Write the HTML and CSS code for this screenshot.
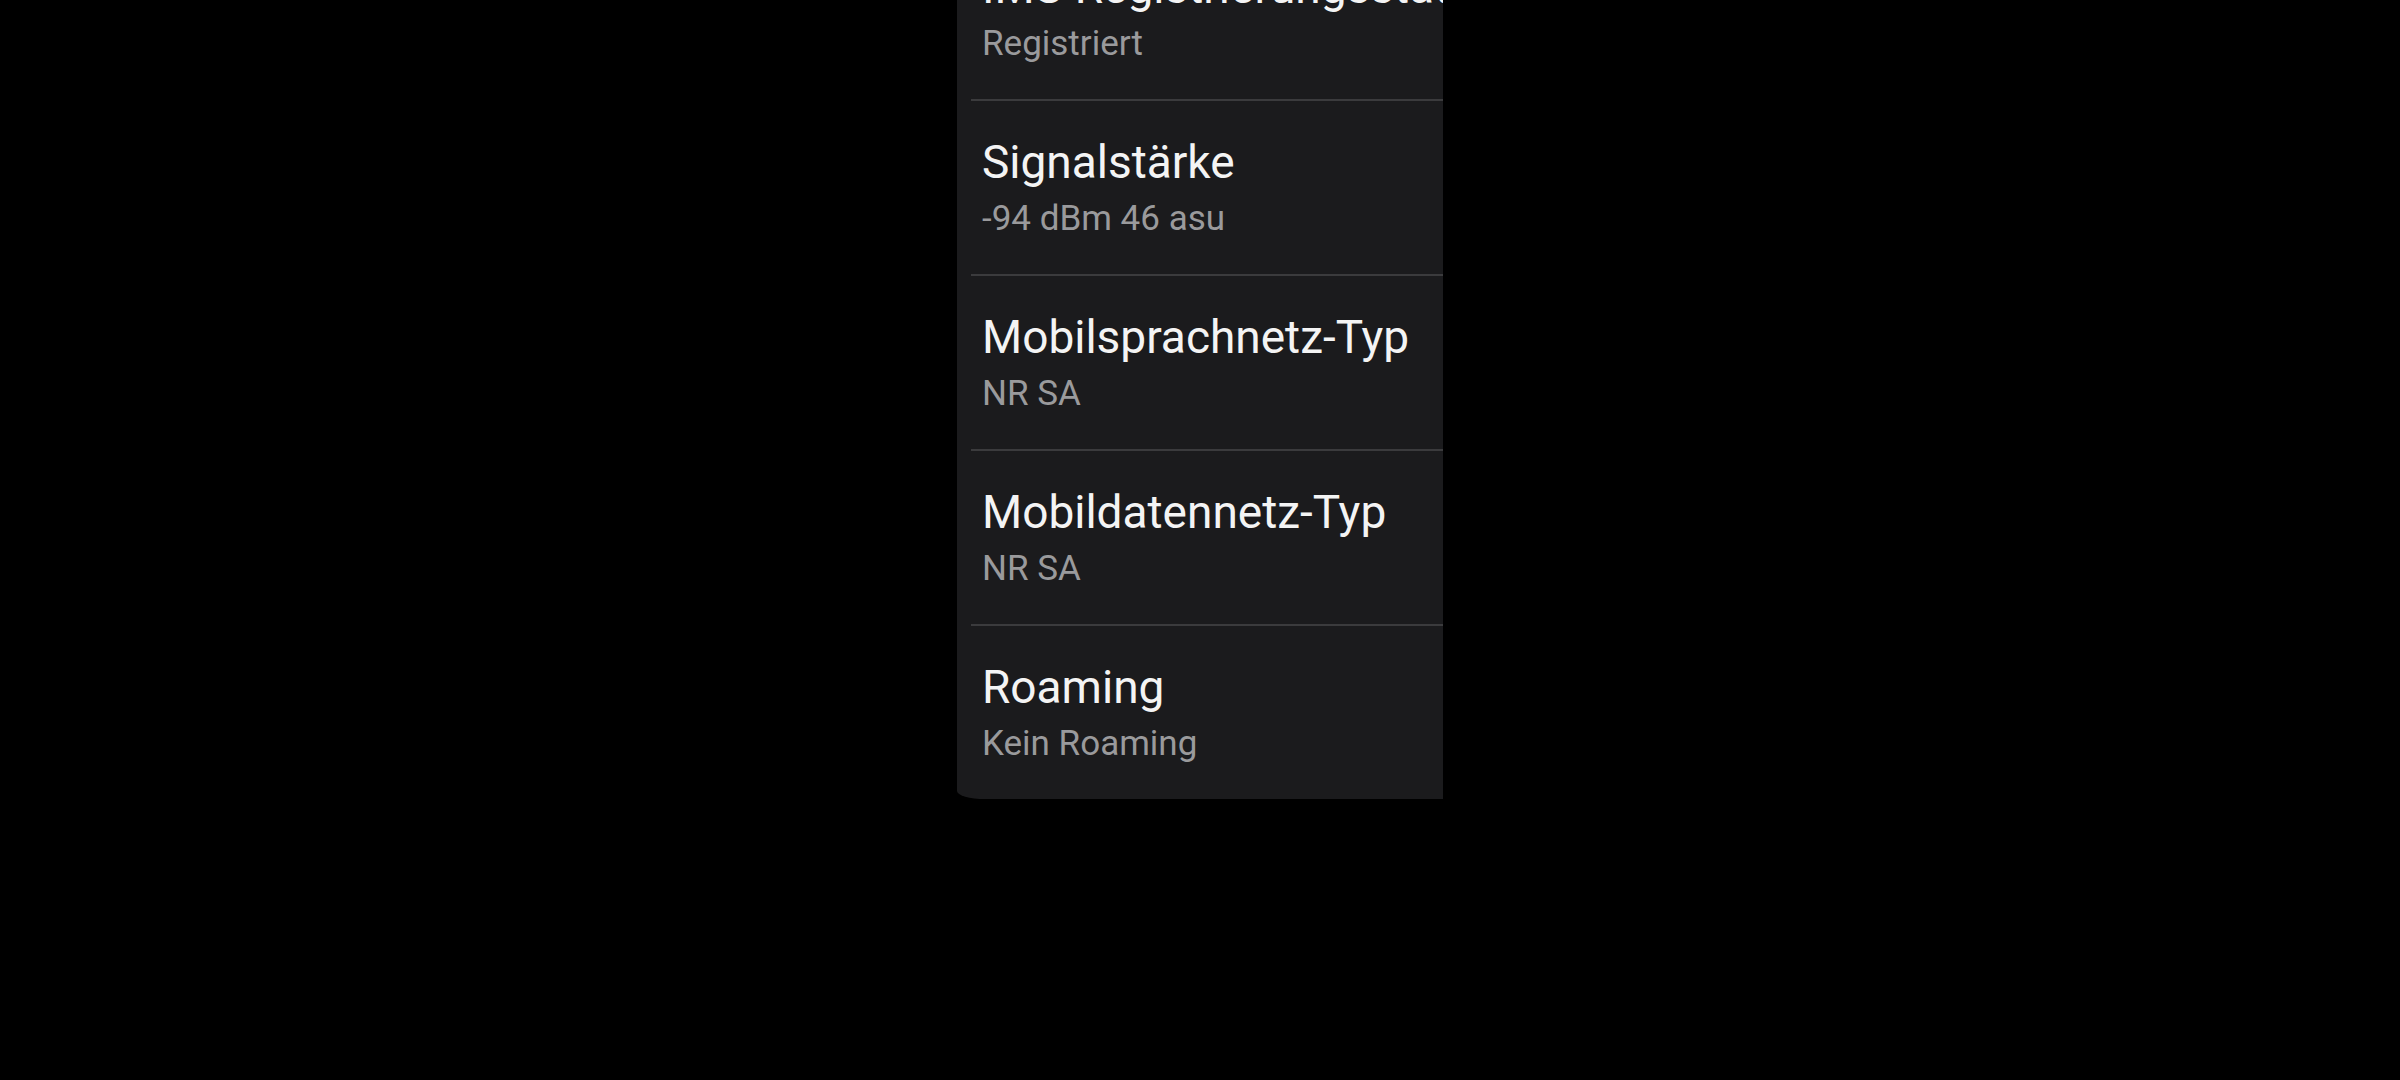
FILE: index.html
```html
<!DOCTYPE html>
<html lang="de">
<head>
    <meta charset="UTF-8">
    <meta name="viewport" content="width=device-width, initial-scale=1.0">
    <title>Netzwerk-Status</title>
    <link rel="stylesheet" href="styles.css">
</head>
<body>
    <div class="screen">
        <div class="panel">
            <div class="row">
                <div class="row-title">IMS-Registrierungsstatus</div>
                <div class="row-value">Registriert</div>
            </div>
            <div class="row">
                <div class="row-title">Signalstärke</div>
                <div class="row-value">-94 dBm 46 asu</div>
            </div>
            <div class="row">
                <div class="row-title">Mobilsprachnetz-Typ</div>
                <div class="row-value">NR SA</div>
            </div>
            <div class="row">
                <div class="row-title">Mobildatennetz-Typ</div>
                <div class="row-value">NR SA</div>
            </div>
            <div class="row">
                <div class="row-title">Roaming</div>
                <div class="row-value">Kein Roaming</div>
            </div>
        </div>
    </div>
</body>
</html>
```

FILE: styles.css
```css
html, body {
    margin: 0;
    padding: 0;
    background-color: #000;
    height: 100%;
    overflow: hidden;
}
body {
    font-family: 'Roboto', 'Inter', sans-serif;
}
.screen {
    display: flex;
    justify-content: center;
}
.panel {
    width: 486px;
    margin-top: -76px;
    background-color: #1b1b1d;
    border-bottom-left-radius: 28px 8px;
    overflow: hidden;
}
.row {
    margin-left: 14px;
    padding: 35px 0 33px 11px;
    white-space: nowrap;
}
.row + .row {
    border-top: 2px solid #3b3b3d;
    padding-top: 33px;
}
.row-title {
    color: #f4f4f4;
    font-size: 46px;
    line-height: 56px;
}
.row-value {
    color: #9a9a9c;
    font-size: 35px;
    line-height: 44px;
    margin-top: 7px;
}
```
